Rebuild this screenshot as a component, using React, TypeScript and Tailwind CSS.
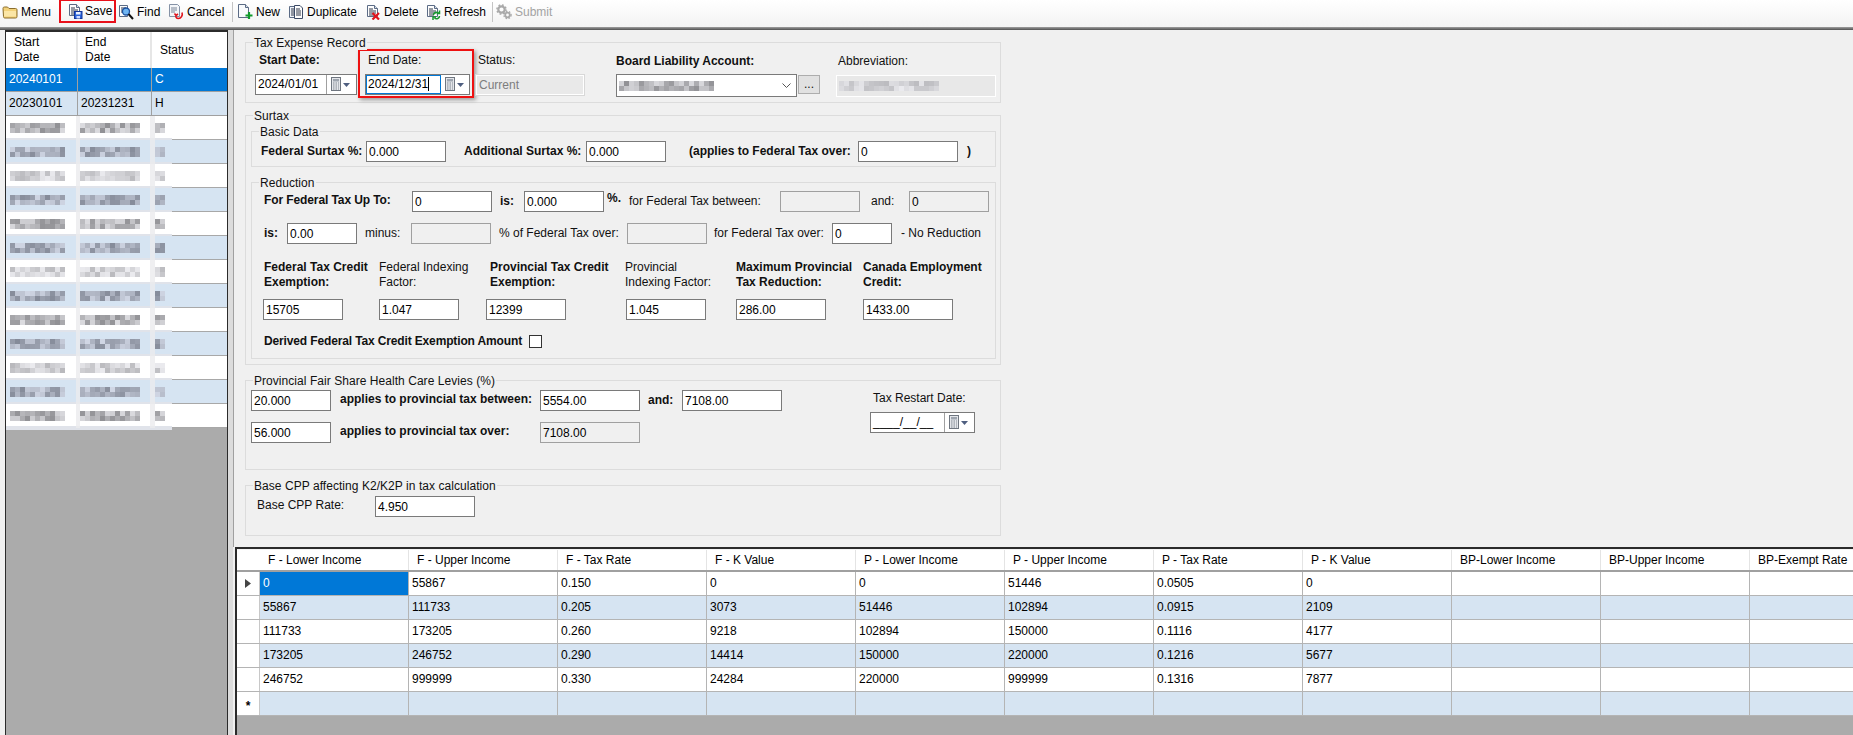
import React from "react";

const font = "font-['Liberation_Sans',Arial,sans-serif]";

function Mosaic({ cols, seed, blue = false, light = false }: { cols: number; seed: number; blue?: boolean; light?: boolean }) {
  const cells: string[] = [];
  for (let i = 0; i < cols * 2; i++) {
    const v = Math.abs(Math.sin((i + 1) * 12.9898 + seed * 78.233) * 43758.5453) % 1;
    const base = light ? 185 : 145;
    const g = Math.round(base + v * (light ? 50 : 75));
    cells.push(blue ? `rgb(${g - 12},${g - 6},${g + 8})` : `rgb(${g},${g},${g + 4})`);
  }
  return (
    <div className="grid shrink-0" style={{ gridTemplateColumns: `repeat(${cols},5px)`, gridAutoRows: "5px" }}>
      {cells.map((c, i) => (
        <div key={i} style={{ backgroundColor: c }} />
      ))}
    </div>
  );
}

const Doc = () => (
  <>
    <path d="M2.5 1.5h7l3 3v8h-10z" fill="#fdfdfd" stroke="#5b6b85" />
    <path d="M9.5 1.5v3h3" fill="#d8dfe9" stroke="#5b6b85" />
    <path d="M4 5h4M4 7h7M4 9h7M4 11h5" stroke="#30384a" />
  </>
);

const Svg = ({ children }: { children: React.ReactNode }) => (
  <svg width="16" height="16" viewBox="0 0 16 16" fill="none" className="shrink-0">
    {children}
  </svg>
);

const icons: Record<string, React.ReactNode> = {
  Menu: (
    <Svg>
      <path d="M1 4.5c0-1 .5-1.5 1.500-1.500h3l1.500 1.500h6.500c1 0 1.500.5 1.500 1.500v6.500c0 1-.5 1.500-1.500 1.500h-10.500c-1 0-1.500-.5-1.500-1.500z" fill="#f3d27a" stroke="#8a6d2c" />
      <path d="M2 7h12v5.500h-12z" fill="#fbe6a6" />
    </Svg>
  ),
  Save: (
    <Svg>
      <Doc />
      <rect x="7.500" y="8.500" width="7.500" height="7" fill="#2b63d9" stroke="#12359a" />
      <rect x="9" y="9" width="4.500" height="2.500" fill="#e9f0ff" />
      <rect x="9.500" y="13" width="3.500" height="2.500" fill="#cfdcff" />
    </Svg>
  ),
  Find: (
    <Svg>
      <path d="M1.500 1.500h8v11h-8z" fill="#fdfdfd" stroke="#5b6b85" />
      <path d="M3 4h5M3 6h3M3 8h3" stroke="#30384a" />
      <circle cx="8" cy="7.500" r="3.500" fill="#6fb5f2" stroke="#1b4f9e" strokeWidth="1.300" />
      <path d="M10.500 10l4.500 5" stroke="#111" strokeWidth="2" />
    </Svg>
  ),
  Cancel: (
    <Svg>
      <path d="M1.500 .5h8l2 2v10h-10z" fill="#f4f6f9" stroke="#8592a6" />
      <path d="M3 4h6M3 6h6M3 8h4" stroke="#7b8698" />
      <path d="M14 8.500c1 3-1 6-3.500 6s-3-2-2.500-3.500M6.500 9.500l1.500 2 2-1.500" stroke="#e0141c" strokeWidth="1.600" />
    </Svg>
  ),
  New: (
    <Svg>
      <path d="M1.500 .5h7l3 3v10h-10z" fill="#f8fafc" stroke="#5b6b85" />
      <path d="M8.500 .5v3h3" fill="#d8dfe9" stroke="#5b6b85" />
      <path d="M12 8v7M8.500 11.500h7" stroke="#119a2c" strokeWidth="2.200" />
    </Svg>
  ),
  Duplicate: (
    <Svg>
      <path d="M1.500 2.500h6v11h-6z" fill="#eef2f8" stroke="#5b6b85" />
      <path d="M3 5h3M3 7h3M3 9h3M3 11h3" stroke="#30384a" />
      <path d="M6.500 1.500h5.500l2.500 2.500v10.500h-8z" fill="#fdfdfd" stroke="#3c4a66" />
      <path d="M8 5h4M8 7h5M8 9h5M8 11h5" stroke="#30384a" />
    </Svg>
  ),
  Delete: (
    <Svg>
      <Doc />
      <path d="M7.500 9l6.500 6.500M14 9l-6.500 6.500" stroke="#e0141c" strokeWidth="2.200" />
    </Svg>
  ),
  Refresh: (
    <Svg>
      <Doc />
      <path d="M8.500 11c0-2.500 3-3.500 5-2M14.500 6.500v3h-3M14.500 12c0 2.500-3 3.500-5 2M8 16v-3h3" stroke="#17992e" strokeWidth="1.500" />
    </Svg>
  ),
  Submit: (
    <Svg>
      <circle cx="5.500" cy="5.500" r="3.200" stroke="#a9a9a9" strokeWidth="2.200" />
      <circle cx="5.500" cy="5.500" r="4.600" stroke="#a9a9a9" strokeWidth="1.500" strokeDasharray="1.800 1.800" />
      <circle cx="11.500" cy="11" r="2.300" stroke="#a9a9a9" strokeWidth="1.800" />
      <circle cx="11.500" cy="11" r="3.600" stroke="#a9a9a9" strokeWidth="1.300" strokeDasharray="1.500 1.500" />
    </Svg>
  ),
};

function Tool({ name, className = "", disabled = false }: { name: string; className?: string; disabled?: boolean }) {
  return (
    <div className={`flex items-center shrink-0 ${disabled ? "text-[#a3a3a3]" : "text-black"} ${className}`}>
      {icons[name]}
      <span className={name === "Save" ? "ml-[2px]" : "ml-[3px]"}>{name}</span>
    </div>
  );
}

function Box({ className = "", children, off = false }: { className?: string; children?: React.ReactNode; off?: boolean }) {
  return (
    <div
      className={`h-[21px] shrink-0 border border-[#7a7a7a] px-[2px] text-[12px] leading-[20px] text-black overflow-hidden ${off ? "bg-[#f0f0f0] border-[#a0a0a0]" : "bg-white"} ${className}`}
    >
      {children}
    </div>
  );
}

const Calendar = () => (
  <div className="flex items-center gap-[1px] pl-[3px]">
    <svg width="12" height="15" viewBox="0 0 12 15" fill="none">
      <rect x="1.500" y=".5" width="9" height="13" fill="#e4e6ea" stroke="#6f7680" />
      <rect x="3" y="2" width="6" height="2.500" fill="#9ea5af" />
      <path d="M3 6h1.500M5.500 6h1.500M8 6h1M3 8h1.500M5.500 8h1.500M8 8h1M3 10h1.500M5.500 10h1.500M8 10h1M3 12h1.500M5.500 12h1.500M8 12h1" stroke="#7f8690" />
    </svg>
    <svg width="7" height="4" viewBox="0 0 7 4">
      <path d="M0 0h7L3.500 4z" fill="#4f5f80" />
    </svg>
  </div>
);

function DateBox({ value, textW, boxW, focus = false }: { value: React.ReactNode; textW: string; boxW: string; focus?: boolean }) {
  return (
    <div className={`flex h-[21px] shrink-0 border border-[#7a7a7a] bg-white text-[12px] leading-[19px] text-black ${boxW}`}>
      <div className={`h-full px-[2px] border-r ${focus ? "border-[#0078d7] outline outline-[#0078d7] -outline-offset-1" : "border-[#a0a0a0]"} ${textW}`}>{value}</div>
      <Calendar />
    </div>
  );
}

function Group({ title, className, children }: { title: string; className: string; children: React.ReactNode }) {
  return (
    <div className={`relative border border-[#dcdcdc] shrink-0 ${className}`}>
      <span className="absolute -top-[7px] left-[7px] bg-[#f0f0f0] px-[1px] text-[12px] leading-[14px] tracking-[0.05px] text-[#111] whitespace-nowrap">{title}</span>
      {children}
    </div>
  );
}

const B = ({ className = "", children }: { className?: string; children: React.ReactNode }) => (
  <div className={`shrink-0 font-bold text-[12px] leading-[15px] whitespace-nowrap ${className}`}>{children}</div>
);
const L = ({ className = "", children }: { className?: string; children: React.ReactNode }) => (
  <div className={`shrink-0 text-[12px] leading-[15px] whitespace-nowrap ${className}`}>{children}</div>
);

const blurredRows = Array.from({ length: 13 }, (_, i) => i);

function LeftPanel() {
  return (
    <div className="ml-[5px] w-[223px] shrink-0 border-x border-t-2 border-[#2b2b2b] bg-[#ababab] text-[12px] text-black overflow-hidden">
      <div className="flex h-[36px] bg-white border-b-2 border-[#a0a0a0] leading-[15px] box-content -mb-[2px]">
        <div className="w-[72px] pl-[8px] pt-[3px] border-r-2 border-[#e6e6e6]">Start<br />Date</div>
        <div className="w-[74px] pl-[7px] pt-[3px] border-r-2 border-[#e6e6e6]">End<br />Date</div>
        <div className="flex-1 pl-[8px] pt-[11px]">Status</div>
      </div>
      <div className="flex h-[24px] bg-[#0078d7] text-white leading-[23px] border-b border-[#a0a0a0]">
        <div className="w-[72px] pl-[3px] border-r border-[#a0a0a0]">20240101</div>
        <div className="w-[74px] pl-[3px] border-r border-[#a0a0a0]"></div>
        <div className="flex-1 pl-[3px]">C</div>
      </div>
      <div className="flex h-[24px] bg-[#d6e4f2] leading-[23px] border-b border-[#a0a0a0]">
        <div className="w-[72px] pl-[3px] border-r border-[#a0a0a0]">20230101</div>
        <div className="w-[74px] pl-[3px] border-r border-[#a0a0a0]">20231231</div>
        <div className="flex-1 pl-[3px]">H</div>
      </div>
      {blurredRows.map((i) => {
        const alt = i % 2 === 1;
        return (
          <div key={i} className={`relative flex items-center h-[24px] border-b border-[#a8a8a8] ${alt ? "bg-[#d6e4f2]" : "bg-white"}`}>
            <div className="w-[74px] pl-[4px]"><Mosaic cols={11} seed={i + 1} blue={alt} light={i % 4 === 2} /></div>
            <div className="w-[75px] pl-[0px]"><Mosaic cols={12} seed={i + 31} blue={alt} light={i % 4 === 2} /></div>
            <div className="pl-[0px]"><Mosaic cols={2} seed={i + 61} blue={alt} light={i % 4 === 2} /></div>
            <div className="absolute left-[0px] -bottom-[3px] w-[166px] h-[4px] bg-[#e0e3ea]" />
            <div className="absolute left-[70px] top-0 w-[4px] h-[24px] bg-[#ebebed]/80" />
            <div className="absolute left-[144px] top-0 w-[5px] h-[24px] bg-[#ebebed]/80" />
          </div>
        );
      })}
    </div>
  );
}

const headers = ["F - Lower Income", "F - Upper Income", "F - Tax Rate", "F - K Value", "P - Lower Income", "P - Upper Income", "P - Tax Rate", "P - K Value", "BP-Lower Income", "BP-Upper Income", "BP-Exempt Rate"];
const rows = [
  ["0", "55867", "0.150", "0", "0", "51446", "0.0505", "0", "", "", ""],
  ["55867", "111733", "0.205", "3073", "51446", "102894", "0.0915", "2109", "", "", ""],
  ["111733", "173205", "0.260", "9218", "102894", "150000", "0.1116", "4177", "", "", ""],
  ["173205", "246752", "0.290", "14414", "150000", "220000", "0.1216", "5677", "", "", ""],
  ["246752", "999999", "0.330", "24284", "220000", "999999", "0.1316", "7877", "", "", ""],
  ["", "", "", "", "", "", "", "", "", "", ""],
];

function DataGrid() {
  return (
    <div className="flex-1 min-h-0 ml-[2px] border-t-2 border-l-2 border-[#2b2b2b] bg-[#ababab] overflow-hidden text-[12px] text-black">
      <div className="pt-[1px] bg-[#f4f4f4] w-[1700px]">
        <div className="flex h-[22px] bg-white border-b-2 border-[#a0a0a0] pl-[23px]">
          {headers.map((h) => (
            <div key={h} className="w-[149px] shrink-0 pl-[8px] leading-[20px] border-r border-[#e4e4e4] whitespace-nowrap">{h}</div>
          ))}
        </div>
      </div>
      {rows.map((r, i) => (
        <div key={i} className="flex h-[24px] w-[1700px] border-b border-[#b4b4b4]">
          <div className="w-[23px] shrink-0 bg-white border-r border-[#c8c8c8] flex items-center justify-center">
            {i === 0 && (
              <svg width="6" height="9" viewBox="0 0 6 9"><path d="M0 0l6 4.500L0 9z" fill="#454545" /></svg>
            )}
            {i === 5 && <span className="font-bold leading-[23px] pt-[6px]">*</span>}
          </div>
          {r.map((c, j) => (
            <div
              key={j}
              className={`w-[149px] shrink-0 pl-[3px] leading-[23px] border-r border-[#b4b4b4] ${i === 0 && j === 0 ? "bg-[#0078d7] text-white" : i % 2 ? "bg-[#d6e4f2]" : "bg-white"}`}
            >
              {c}
            </div>
          ))}
        </div>
      ))}
    </div>
  );
}

function Form() {
  return (
    <div className="h-[517px] shrink-0 bg-[#f0f0f0] border-l border-[#a0a0a0] pl-[11px] pt-[12px] text-[#111] overflow-hidden">
      <Group title="Tax Expense Record" className="w-[756px] h-[61px]">
        <div className="flex pl-[9px] pt-[6px]">
          <div className="w-[103px] shrink-0">
            <B className="h-[25px] pl-[4px] pt-[4px]">Start Date:</B>
            <DateBox value="2024/01/01" boxW="w-[102px]" textW="w-[71px]" />
          </div>
          <div className="w-[116px] h-[49px] shrink-0 border-2 border-[#ee1111] shadow-[2px_2px_4px_rgba(0,0,0,0.35)] pl-[5px]">
            <L className="h-[23px] pl-[3px] pt-[2px]">End Date:</L>
            <DateBox
              focus
              boxW="w-[105px]"
              textW="w-[75px]"
              value={<span>2024/12/31<span className="inline-block w-[1px] h-[14px] bg-black align-[-3px]" /></span>}
            />
          </div>
          <div className="w-[142px] shrink-0 pl-[1px]">
            <L className="h-[25px] pl-[3px] pt-[4px]">Status:</L>
            <div className="h-[22px] w-[110px] border border-[#d8d8d8] bg-[#e9e9e9] outline outline-white -outline-offset-2 px-[3px] text-[12px] leading-[20px] text-[#7d7d7d]">Current</div>
          </div>
          <div className="w-[182px] shrink-0">
            <B className="h-[25px] pt-[5px]">Board Liability Account:</B>
            <div className="h-[23px] w-[181px] border border-[#7a7a7a] bg-white flex items-center justify-between pl-[2px] pr-[5px]">
              <Mosaic cols={19} seed={91} />
              <svg width="9" height="6" viewBox="0 0 9 6" fill="none"><path d="M.5.5l4 4 4-4" stroke="#555" /></svg>
            </div>
          </div>
          <div className="w-[38px] shrink-0 pt-[26px]">
            <div className="w-[22px] h-[19px] border border-[#adadad] bg-[#e1e1e1] text-center text-[12px] leading-[16px]">...</div>
          </div>
          <div className="shrink-0">
            <L className="h-[25px] pl-[2px] pt-[5px]">Abbreviation:</L>
            <div className="mt-[1px] h-[22px] w-[160px] border border-white bg-[#e8e8e8] pl-[2px] flex items-center">
              <Mosaic cols={20} seed={121} light />
            </div>
          </div>
        </div>
      </Group>

      <Group title="Surtax" className="w-[756px] h-[250px] mt-[12px]">
        <Group title="Basic Data" className="ml-[5px] mt-[15px] w-[745px] h-[36px]">
          <div className="flex items-center pl-[9px] pt-[9px]">
            <B className="w-[105px]">Federal Surtax %:</B>
            <Box className="w-[80px]">0.000</Box>
            <B className="ml-[18px] w-[122px]">Additional Surtax %:</B>
            <Box className="w-[80px]">0.000</Box>
            <B className="ml-[23px] w-[169px]">(applies to Federal Tax over:</B>
            <Box className="w-[100px]">0</Box>
            <B className="ml-[9px]">)</B>
          </div>
        </Group>
        <Group title="Reduction" className="ml-[5px] mt-[15px] w-[745px] h-[177px]">
          <div className="flex items-center pl-[12px] pt-[8px]">
            <B className="w-[148px] -mt-[3px] tracking-[-0.1px]">For Federal Tax Up To:</B>
            <Box className="w-[80px]">0</Box>
            <B className="ml-[8px] w-[24px]">is:</B>
            <Box className="w-[80px]">0.000</Box>
            <B className="ml-[3px] w-[22px] -mt-[6px]">%.</B>
            <L className="w-[151px]">for Federal Tax between:</L>
            <Box off className="w-[80px]" />
            <L className="ml-[11px] w-[38px]">and:</L>
            <Box off className="w-[80px]">0</Box>
          </div>
          <div className="flex items-center pl-[12px] mt-[11px]">
            <B className="w-[23px]">is:</B>
            <Box className="w-[70px]">0.00</Box>
            <L className="ml-[8px] w-[46px]">minus:</L>
            <Box off className="w-[80px]" />
            <L className="ml-[8px] w-[128px]">% of Federal Tax over:</L>
            <Box off className="w-[80px]" />
            <L className="ml-[7px] w-[118px]">for Federal Tax over:</L>
            <Box className="w-[60px]">0</Box>
            <L className="ml-[9px]">- No Reduction</L>
          </div>
          <div className="flex pl-[12px] mt-[16px] h-[39px]">
            <B className="w-[115px]">Federal Tax Credit<br />Exemption:</B>
            <L className="w-[111px]">Federal Indexing<br />Factor:</L>
            <B className="w-[135px]">Provincial Tax Credit<br />Exemption:</B>
            <L className="w-[111px]">Provincial<br />Indexing Factor:</L>
            <B className="w-[127px]">Maximum Provincial<br />Tax Reduction:</B>
            <B className="w-[120px]">Canada Employment<br />Credit:</B>
          </div>
          <div className="flex pl-[11px]">
            <Box className="w-[80px]">15705</Box>
            <Box className="ml-[36px] w-[80px]">1.047</Box>
            <Box className="ml-[27px] w-[80px]">12399</Box>
            <Box className="ml-[60px] w-[80px]">1.045</Box>
            <Box className="ml-[30px] w-[90px]">286.00</Box>
            <Box className="ml-[37px] w-[90px]">1433.00</Box>
          </div>
          <div className="flex items-center pl-[12px] mt-[14px]">
            <B className="w-[265px] tracking-[-0.14px]">Derived Federal Tax Credit Exemption Amount</B>
            <div className="w-[13px] h-[13px] border border-[#333] bg-white" />
          </div>
        </Group>
      </Group>

      <Group title="Provincial Fair Share Health Care Levies (%)" className="w-[756px] h-[90px] mt-[15px]">
        <div className="flex pt-[9px] pl-[5px]">
          <div className="w-[619px] shrink-0">
            <div className="flex items-center">
              <Box className="w-[80px]">20.000</Box>
              <B className="ml-[9px] w-[200px] -mt-[2px]">applies to provincial tax between:</B>
              <Box className="w-[100px]">5554.00</Box>
              <B className="ml-[8px] w-[34px]">and:</B>
              <Box className="w-[100px]">7108.00</Box>
            </div>
            <div className="flex items-center mt-[11px]">
              <Box className="w-[80px]">56.000</Box>
              <B className="ml-[9px] w-[200px] -mt-[2px]">applies to provincial tax over:</B>
              <Box off className="w-[100px]">7108.00</Box>
            </div>
          </div>
          <div className="shrink-0">
            <L className="h-[22px] pl-[3px] leading-[16px]">Tax Restart Date:</L>
            <DateBox value="____/__/__" boxW="w-[105px]" textW="w-[74px]" />
          </div>
        </div>
      </Group>

      <Group title="Base CPP affecting K2/K2P in tax calculation" className="w-[756px] h-[51px] mt-[15px]">
        <div className="flex items-center pt-[10px] pl-[11px]">
          <L className="w-[118px] -mt-[2px]">Base CPP Rate:</L>
          <Box className="w-[100px]">4.950</Box>
        </div>
      </Group>
    </div>
  );
}

export default function App() {
  return (
    <div className={`${font} flex flex-col w-[1853px] h-[735px] overflow-hidden bg-[#f0f0f0]`}>
      <div className="flex items-center h-[27px] shrink-0 pb-[3px] pl-[2px] bg-gradient-to-b from-white to-[#f3f3f3] text-[12px]">
        <Tool name="Menu" className="w-[57px]" />
        <div className="w-[57px] h-[24px] -mt-[3px] pl-[6px] border-2 border-[#e8101a] flex items-center shrink-0">
          <Tool name="Save" />
        </div>
        <Tool name="Find" className="ml-[2px] w-[50px]" />
        <Tool name="Cancel" className="w-[64px]" />
        <div className="w-[1px] h-[20px] bg-[#c4c4c4] mr-[4px] shrink-0" />
        <Tool name="New" className="w-[51px]" />
        <Tool name="Duplicate" className="w-[77px]" />
        <Tool name="Delete" className="w-[60px]" />
        <Tool name="Refresh" className="w-[67px]" />
        <div className="w-[1px] h-[20px] bg-[#c4c4c4] mr-[3px] shrink-0" />
        <Tool name="Submit" disabled />
      </div>
      <div className="h-[3px] shrink-0 bg-gradient-to-b from-[#a0a0a0] to-[#505050]" />
      <div className="flex flex-1 min-h-0">
        <LeftPanel />
        <div className="w-[5px] shrink-0 bg-[#dcdcdc]" />
        <div className="flex flex-col flex-1 min-w-0">
          <Form />
          <DataGrid />
        </div>
      </div>
    </div>
  );
}
